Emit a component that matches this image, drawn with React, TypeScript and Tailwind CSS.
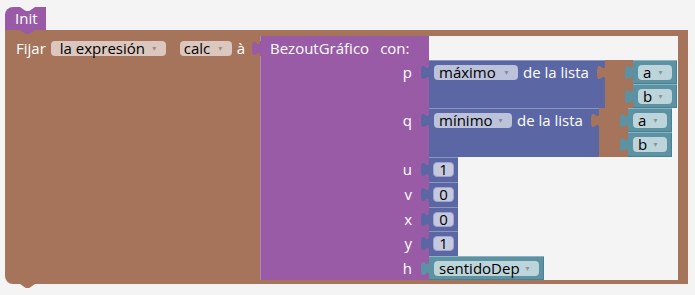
import type { ReactNode } from 'react'

type Tone = 'brown' | 'blue' | 'teal' | 'purple'

const fillOf: Record<Tone, string> = {
  brown: '#a5745b',
  blue: '#5b67a5',
  teal: '#5b93a5',
  purple: '#995ba5',
}

const fieldBg: Record<Tone, string> = {
  brown: 'bg-[#dbc7bd]',
  blue: 'bg-[#bdc2db]',
  teal: 'bg-[#bdd4db]',
  purple: 'bg-[#d6bddb]',
}

// output tab of a value block, hangs off the left edge
const Tab = ({ tone }: { tone: Tone }) => (
  <svg
    className="absolute -left-[8px] top-0 h-[20px] w-[9px] overflow-visible"
    viewBox="0 0 9 20"
  >
    <path d="M9 5 H8 C8 15 0 -3 0 12.5 S8 10 8 20 H9 Z" fill={fillOf[tone]} />
  </svg>
)

// next-statement bump under a block
const Bump = ({ color, className }: { color: string; className: string }) => (
  <svg className={`absolute h-[4px] w-[15px] ${className}`} viewBox="0 0 15 4">
    <path d="M0 0 L5 3.5 Q6 4 7 4 L8 4 Q9 4 10 3.5 L15 0 Z" fill={color} />
  </svg>
)

const Drop = ({
  label,
  tone,
  className,
}: {
  label: string
  tone: Tone
  className: string
}) => (
  <div
    className={`flex h-[15px] shrink-0 items-center justify-between rounded-[4px] pr-[8px] leading-[15px] text-black ${fieldBg[tone]} ${className}`}
  >
    <span>{label}</span>
    <span className="text-[7px] text-black/30">▼</span>
  </div>
)

const Num = ({ value }: { value: string }) => (
  <div className="relative h-full w-[29px] shrink-0 bg-[#5b67a5] pl-[4px] pt-[5px] shadow-[inset_0_1px_0_#8c95c0]">
    <Tab tone="blue" />
    <div className="flex h-[15px] w-[21px] items-center justify-center rounded-[4px] border border-[#9ea4cb] bg-[#c5c9e0] leading-[15px] text-black">
      {value}
    </div>
  </div>
)

const Teal = ({ label, className }: { label: string; className: string }) => (
  <div
    className={`relative w-[44px] shrink-0 bg-[#5b93a5] pl-[5px] pt-[5px] shadow-[inset_0_1px_0_#8cb3c0,inset_-1px_-1px_0_#4d7f8f] ${className}`}
  >
    <Tab tone="teal" />
    <Drop label={label} tone="teal" className="w-[34px] pl-[5px]" />
  </div>
)

// "máximo/mínimo de la lista" with a vertical list of a, b
const ListOp = ({ op, w, opW, listW, last }: { op: string; w: string; opW: string; listW: string; last: string }) => (
  <div className="flex h-full">
    <div className={`relative flex h-full shrink-0 items-start bg-[#5b67a5] pl-[5px] pt-[5px] shadow-[inset_0_1px_0_#8c95c0] ${w}`}>
      <Tab tone="blue" />
      <Drop label={op} tone="blue" className={`${opW} pl-[5px]`} />
      <span className="ml-[5px] leading-[15px] text-white">de la lista</span>
    </div>
    <div className={`relative h-full shrink-0 bg-[#a5745b] ${listW}`}>
      <Tab tone="brown" />
    </div>
    <div className="flex flex-col">
      <Teal label="a" className="h-[24px]" />
      <Teal label="b" className={last} />
    </div>
  </div>
)

const Row = ({ label, h, children }: { label?: string; h: string; children?: ReactNode }) => (
  <div className={`flex ${h}`}>
    <div className="w-[169px] shrink-0 bg-[#995ba5] pr-[17px] text-right leading-[24px] text-white shadow-[inset_1px_0_0_#b385bd]">
      {label}
    </div>
    {children}
  </div>
)

export default function App() {
  return (
    <div className="h-[295px] w-[695px] overflow-hidden bg-[#f4f4f4] pl-[5px] pt-[7px] text-[15px] [font-family:'Open_Sans',sans-serif]">
      {/* Init */}
      <div className="relative z-10 flex h-[23px] w-[41px] items-center rounded-tl-[8px] bg-[#995ba5] pl-[10px] leading-[23px] text-white">
        Init
        <Bump color="#f4f4f4" className="left-[15px] top-0 h-[3px]" />
        <Bump color="#995ba5" className="left-[15px] top-full" />
      </div>

      {/* Fijar ... à */}
      <div className="relative flex h-[254px] w-[683px] rounded-bl-[8px] bg-[#a5745b] pb-[4px] pr-[10px] pt-[6px]">
        <div className="flex w-[255px] shrink-0 items-start pl-[11px] pt-[5px] text-white">
          <div className="flex h-[15px] items-center leading-[15px]">
            <span>Fijar</span>
            <Drop label="la expresión" tone="brown" className="ml-[5px] w-[115px] pl-[9px]" />
            <Drop label="calc" tone="brown" className="ml-[14px] w-[52px] pl-[4px]" />
            <span className="ml-[5px]">à</span>
          </div>
        </div>

        <div className="flex flex-1 flex-col bg-[#f4f4f4]">
          <div className="flex h-[24px]">
            <div className="relative flex w-[169px] shrink-0 items-center bg-[#995ba5] pl-[10px] leading-[24px] text-white shadow-[inset_1px_0_0_#b385bd]">
              <Tab tone="purple" />
              <span>BezoutGráfico</span>
              <span className="ml-[11px]">con:</span>
            </div>
          </div>
          <Row label="p" h="h-[48px]">
            <ListOp op="máximo" w="w-[176px]" opW="w-[84px]" listW="w-[28px]" last="h-[24px]" />
          </Row>
          <Row label="q" h="h-[49px]">
            <ListOp op="mínimo" w="w-[170px]" opW="w-[78px]" listW="w-[29px]" last="h-[25px]" />
          </Row>
          <Row label="u" h="h-[25px]">
            <Num value="1" />
          </Row>
          <Row label="v" h="h-[25px]">
            <Num value="0" />
          </Row>
          <Row label="x" h="h-[24px]">
            <Num value="0" />
          </Row>
          <Row label="y" h="h-[25px]">
            <Num value="1" />
          </Row>
          <Row label="h" h="h-[24px]">
            <div className="relative h-full w-[115px] shrink-0 bg-[#5b93a5] pl-[5px] pt-[5px] shadow-[inset_0_1px_0_#8cb3c0,inset_-1px_-1px_0_#4d7f8f]">
              <Tab tone="teal" />
              <Drop label="sentidoDep" tone="teal" className="w-[105px] pl-[5px]" />
            </div>
          </Row>
        </div>

        <Bump color="#a5745b" className="left-[15px] top-full" />
      </div>
    </div>
  )
}
